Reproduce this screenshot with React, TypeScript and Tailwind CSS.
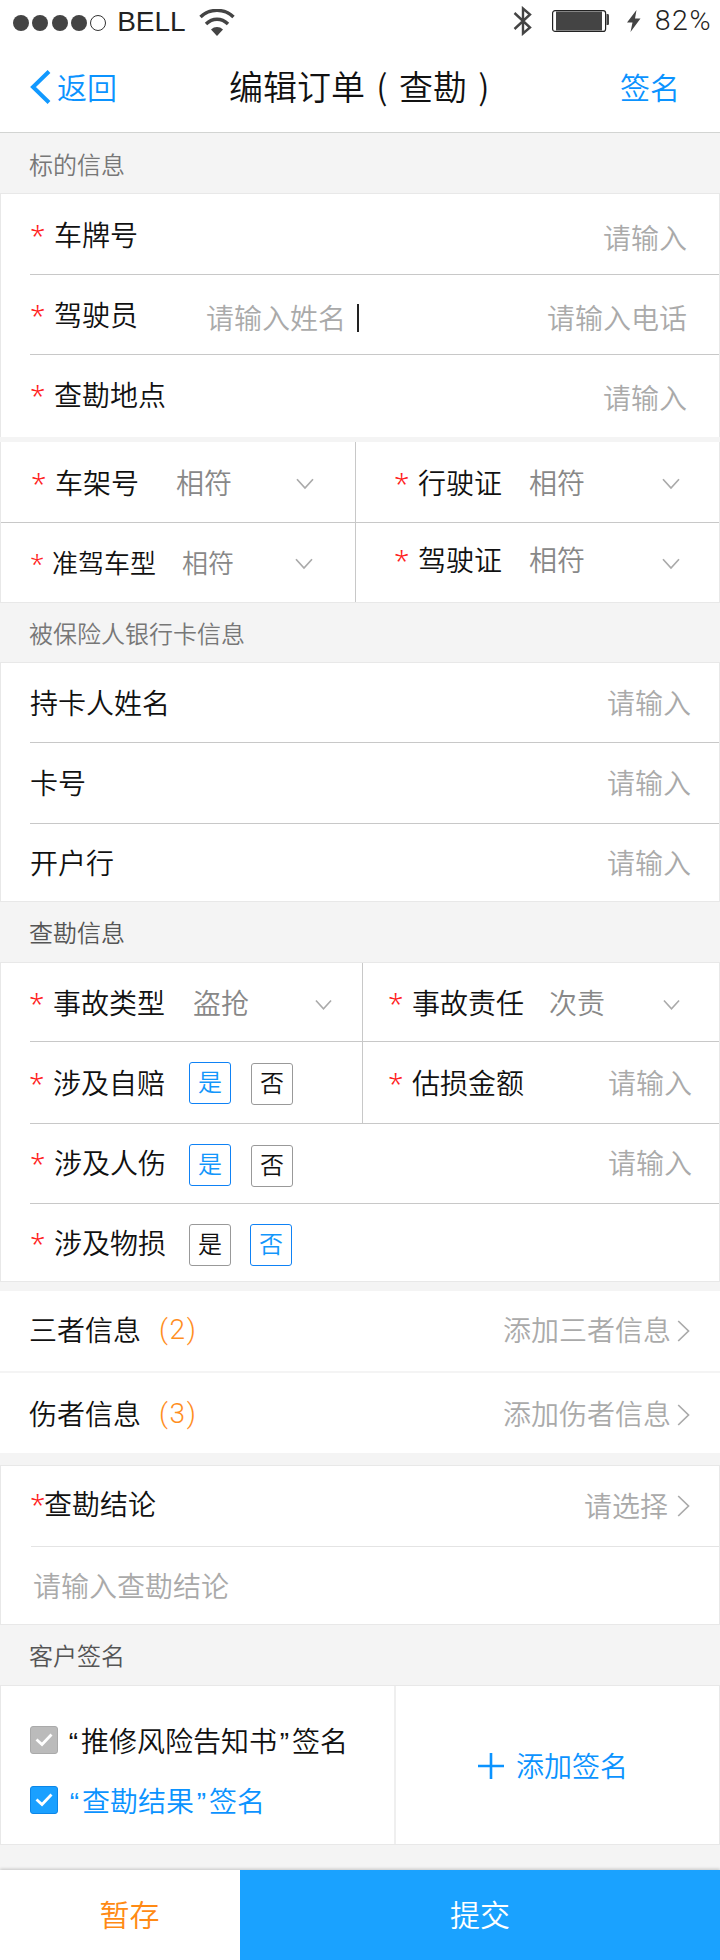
import { useState } from "react";
import type { ReactNode } from "react";

function Star({ className = "" }: { className?: string }) {
  return (
    <span
      className={`shrink-0 w-[24px] font-['Noto_Sans',sans-serif] text-[28px] leading-[32px] text-[#ff2020] ${className}`}
    >
      *
    </span>
  );
}

function Label({ children, className = "" }: { children: ReactNode; className?: string }) {
  return <span className={`shrink-0 text-[28px] leading-[30px] text-[#111] ${className}`}>{children}</span>;
}

function Hint({ children, className = "" }: { children: ReactNode; className?: string }) {
  return <span className={`shrink-0 text-[28px] leading-[30px] text-[#aaa] ${className}`}>{children}</span>;
}

function Count({ value }: { value: number }) {
  return (
    <span className="ml-[18px] pt-[2px] font-['Roboto',sans-serif] text-[28px] leading-[28px] tracking-[1.6px] text-[#ff8e1e]">
      ({value})
    </span>
  );
}

function Quoted({ children }: { children: ReactNode }) {
  return (
    <>
      <span className="inline-block w-[15px] text-center font-['Liberation_Sans',sans-serif]">“</span>
      {children}
      <span className="inline-block w-[15px] text-center font-['Liberation_Sans',sans-serif]">”</span>
    </>
  );
}

function SectionTitle({ children, className = "" }: { children: ReactNode; className?: string }) {
  return <h2 className={`px-[29px] text-[24px] leading-[24px] ${className}`}>{children}</h2>;
}

function ChevronDown({ className = "" }: { className?: string }) {
  return (
    <svg className={`shrink-0 ${className}`} width="18" height="12" viewBox="0 0 18 12" fill="none">
      <path d="M1 1.2L9 10L17 1.2" stroke="#aaa" strokeWidth="1.7" />
    </svg>
  );
}

function ChevronRight({ className = "" }: { className?: string }) {
  return (
    <svg className={`shrink-0 ${className}`} width="13" height="22" viewBox="0 0 13 22" fill="none">
      <path d="M1.2 1L11.5 11L1.2 21" stroke="#aaa" strokeWidth="1.7" />
    </svg>
  );
}

function Choice({
  active,
  onClick,
  children,
  className = "",
}: {
  active: boolean;
  onClick: () => void;
  children: ReactNode;
  className?: string;
}) {
  return (
    <button
      onClick={onClick}
      className={`shrink-0 flex items-center justify-center w-[42px] h-[42px] pb-[4px] rounded-[3px] border bg-white text-[24px] leading-[24px] ${
        active ? "border-[#0f82f5] text-[#1296fb]" : "border-[#999] text-[#111]"
      } ${className}`}
    >
      {children}
    </button>
  );
}

function Check({ className }: { className: string }) {
  return (
    <span className={`shrink-0 flex items-center justify-center w-[28px] h-[28px] rounded-[3px] border ${className}`}>
      <svg width="18" height="14" viewBox="0 0 18 14" fill="none">
        <path d="M1.5 6.5L7 11.5L16.5 1.5" stroke="#fff" strokeWidth="2.8" />
      </svg>
    </span>
  );
}

function StatusBar() {
  return (
    <div className="flex h-[44px] text-[#222]">
      <div className="flex gap-[3.3px] mt-[15px] ml-[13px]">
        {[0, 1, 2, 3].map((i) => (
          <span key={i} className="w-[16px] h-[16px] rounded-full bg-[#444]" />
        ))}
        <span className="w-[16px] h-[16px] rounded-full border border-[#333]" />
      </div>
      <span className="ml-[11px] mt-[8px] font-['Liberation_Sans',sans-serif] text-[28px] leading-[28px]">BELL</span>
      <svg className="ml-[13px] mt-[9px]" width="36" height="28" viewBox="0 0 36 28" fill="none">
        <path d="M1.5 8C10.5 -0.8 25.5 -0.8 34.5 8" stroke="#444" strokeWidth="3.4" />
        <path d="M7 15C13.5 8.6 22.5 8.6 29 15" stroke="#444" strokeWidth="3.4" />
        <path d="M12 20.5C15.5 17.2 20.5 17.2 24 20.5L18 27Z" fill="#444" />
      </svg>
      <div className="ml-auto flex">
        <svg className="mt-[6px]" width="20" height="30" viewBox="0 0 20 30" fill="none">
          <path d="M1.5 7L17 21.5L10 27.5V2.5L17 8.5L1.5 23" stroke="#444" strokeWidth="2.4" />
        </svg>
        <svg className="ml-[19px] mt-[10px]" width="58" height="22" viewBox="0 0 58 22" fill="none">
          <rect x="0.6" y="0.6" width="53" height="20.8" rx="2.5" stroke="#222" strokeWidth="1.2" />
          <rect x="4" y="1.5" width="46" height="19" fill="#444" />
          <path d="M54.5 4H56Q57 4 57 5.5V13.5Q57 15 56 15H54.5Z" fill="#444" />
        </svg>
        <svg className="ml-[17px] mt-[10px]" width="14" height="22" viewBox="0 0 14 22">
          <path d="M9.5 0L0 12.5H5.5L3.5 22L13.5 8.5H8L9.5 0Z" fill="#444" />
        </svg>
        <span className="ml-[14px] mr-[8px] mt-[7px] font-['Roboto',sans-serif] font-light text-[28.5px] leading-[28px] tracking-[1.5px]">
          82%
        </span>
      </div>
    </div>
  );
}

export default function App() {
  const [selfClaim, setSelfClaim] = useState(true);
  const [injury, setInjury] = useState(true);
  const [damage, setDamage] = useState(false);

  return (
    <div
      lang="zh-CN"
      className="w-[720px] h-[1960px] overflow-hidden flex flex-col bg-[#f4f4f4] font-['Noto_Sans_CJK_SC',sans-serif] font-[350] whitespace-nowrap"
    >
      <header className="h-[133px] shrink-0 bg-white border-b border-[#d2d4d2]">
        <StatusBar />
        <div className="flex items-start">
          <button className="flex shrink-0 w-[200px] ml-[29px] text-[#0b93ff]">
            <svg className="mt-[26px]" width="22" height="34" viewBox="0 0 22 34" fill="none">
              <path d="M20 1.5L4 17L20 32.5" stroke="#1199ff" strokeWidth="4" />
            </svg>
            <span className="ml-[6px] mt-[27px] text-[30px] leading-[30px]">返回</span>
          </button>
          <h1 className="flex mt-[25px] text-[34px] leading-[34px] text-[#111]">
            编辑订单<span className="w-[34px] text-center">(</span>查勘
            <span className="w-[34px] text-center">)</span>
          </h1>
          <button className="ml-auto mt-[27px] mr-[40px] text-[30px] leading-[30px] text-[#0b93ff]">签名</button>
        </div>
      </header>

      {/* 标的信息 */}
      <SectionTitle className="h-[60px] pt-[19px] text-[#777]">标的信息</SectionTitle>
      <section className="h-[244px] shrink-0 bg-white border border-b-0 border-[#e8e8e8]">
        <div className="ml-[29px] flex h-[81px] border-b border-[#c8c8c8]">
          <Star className="mt-[25px]" />
          <Label className="mt-[25px]">车牌号</Label>
          <Hint className="ml-auto mr-[32px] mt-[28px]">请输入</Hint>
        </div>
        <div className="ml-[29px] flex h-[80px] border-b border-[#c8c8c8]">
          <Star className="mt-[24px]" />
          <Label className="mt-[24px]">驾驶员</Label>
          <Hint className="ml-[68px] mt-[27px]">请输入姓名</Hint>
          <span className="ml-[11px] mt-[29px] w-[2px] h-[28px] bg-[#222]" />
          <Hint className="ml-auto mr-[32px] mt-[27px]">请输入电话</Hint>
        </div>
        <div className="ml-[29px] flex">
          <Star className="mt-[24px]" />
          <Label className="mt-[24px]">查勘地点</Label>
          <Hint className="ml-auto mr-[32px] mt-[27px]">请输入</Hint>
        </div>
      </section>

      <section className="mt-[5px] h-[161px] shrink-0 grid grid-cols-[355px_363px] grid-rows-[81px_79px] bg-white border border-t-0 border-[#e8e8e8]">
        <div className="flex border-r border-b border-[#c8c8c8] pl-[30px] pt-[25px]">
          <Star />
          <Label>车架号</Label>
          <Hint className="ml-[37px] text-[#888]!">相符</Hint>
          <ChevronDown className="ml-[64px] mt-[11px]" />
        </div>
        <div className="flex border-b border-[#c8c8c8] pl-[38px] pt-[25px]">
          <Star />
          <Label>行驶证</Label>
          <Hint className="ml-[27px] text-[#888]!">相符</Hint>
          <ChevronDown className="ml-[77px] mt-[11px]" />
        </div>
        <div className="flex border-r border-[#c8c8c8] pl-[29px] pt-[24px]">
          <Star className="w-[22px]! text-[26px]!" />
          <Label className="text-[26px]!">准驾车型</Label>
          <Hint className="ml-[26px] text-[26px]! text-[#888]!">相符</Hint>
          <ChevronDown className="ml-[61px] mt-[11px]" />
        </div>
        <div className="flex pl-[38px] pt-[21px]">
          <Star />
          <Label>驾驶证</Label>
          <Hint className="ml-[27px] text-[#888]!">相符</Hint>
          <ChevronDown className="ml-[77px] mt-[14px]" />
        </div>
      </section>

      {/* 被保险人银行卡信息 */}
      <SectionTitle className="h-[59px] pt-[18px] text-[#777]">被保险人银行卡信息</SectionTitle>
      <section className="h-[240px] shrink-0 bg-white border border-[#e8e8e8]">
        <div className="ml-[29px] flex h-[80px] border-b border-[#c8c8c8] pt-[24px] pr-[28px]">
          <Label>持卡人姓名</Label>
          <Hint className="ml-auto">请输入</Hint>
        </div>
        <div className="ml-[29px] flex h-[81px] border-b border-[#c8c8c8] pt-[24px] pr-[28px]">
          <Label>卡号</Label>
          <Hint className="ml-auto">请输入</Hint>
        </div>
        <div className="ml-[29px] flex pt-[23px] pr-[28px]">
          <Label>开户行</Label>
          <Hint className="ml-auto">请输入</Hint>
        </div>
      </section>

      {/* 查勘信息 */}
      <SectionTitle className="h-[60px] pt-[18px] text-[#555]">查勘信息</SectionTitle>
      <section className="h-[320px] shrink-0 bg-white border border-[#e8e8e8]">
        <div className="ml-[29px] flex h-[79px] border-b border-[#c8c8c8]">
          <div className="flex w-[333px] border-r border-[#c8c8c8] pt-[24px]">
            <Star className="-ml-px" />
            <Label>事故类型</Label>
            <Hint className="ml-[28px] text-[#888]!">盗抢</Hint>
            <ChevronDown className="ml-[66px] mt-[12px] w-[17px]" />
          </div>
          <div className="flex pl-[25px] pt-[24px]">
            <Star />
            <Label>事故责任</Label>
            <Hint className="ml-[25px] text-[#888]!">次责</Hint>
            <ChevronDown className="ml-[58px] mt-[12px] w-[17px]" />
          </div>
        </div>
        <div className="ml-[29px] flex h-[82px] border-b border-[#c8c8c8]">
          <div className="flex w-[333px] border-r border-[#c8c8c8]">
            <Star className="-ml-px mt-[25px]" />
            <Label className="mt-[25px]">涉及自赔</Label>
            <Choice active={selfClaim} onClick={() => setSelfClaim(true)} className="ml-[24px] mt-[20px]">
              是
            </Choice>
            <Choice active={!selfClaim} onClick={() => setSelfClaim(false)} className="ml-[20px] mt-[21px]">
              否
            </Choice>
          </div>
          <div className="flex flex-1 pl-[25px] pr-[27px] pt-[25px]">
            <Star />
            <Label>估损金额</Label>
            <Hint className="ml-auto">请输入</Hint>
          </div>
        </div>
        <div className="ml-[29px] flex h-[80px] border-b border-[#c8c8c8]">
          <Star className="mt-[23px]" />
          <Label className="mt-[23px]">涉及人伤</Label>
          <Choice active={injury} onClick={() => setInjury(true)} className="ml-[23px] mt-[20px]">
            是
          </Choice>
          <Choice active={!injury} onClick={() => setInjury(false)} className="ml-[20px] mt-[21px]">
            否
          </Choice>
          <Hint className="ml-auto mr-[27px] mt-[23px]">请输入</Hint>
        </div>
        <div className="ml-[29px] flex">
          <Star className="mt-[23px]" />
          <Label className="mt-[23px]">涉及物损</Label>
          <Choice active={damage} onClick={() => setDamage(true)} className="ml-[23px] mt-[20px]">
            是
          </Choice>
          <Choice active={!damage} onClick={() => setDamage(false)} className="ml-[19px] mt-[20px]">
            否
          </Choice>
        </div>
      </section>

      <section className="mt-[9px] shrink-0">
        <div className="flex h-[80px] bg-white pl-[29px] pt-[23px] pr-[30px]">
          <Label>三者信息</Label>
          <Count value={2} />
          <Hint className="ml-auto">添加三者信息</Hint>
          <ChevronRight className="ml-[6px] mt-[6px]" />
        </div>
        <div className="mt-[2px] flex h-[80px] bg-white pl-[29px] pt-[25px] pr-[30px]">
          <Label>伤者信息</Label>
          <Count value={3} />
          <Hint className="ml-auto">添加伤者信息</Hint>
          <ChevronRight className="ml-[6px] mt-[6px]" />
        </div>
      </section>

      <section className="mt-[12px] h-[160px] shrink-0 bg-white border border-[#e8e8e8]">
        <div className="ml-[30px] flex h-[81px] border-b border-[#e4e4e4] pr-[29px]">
          <Star className="w-[14px]! -ml-px mt-[22px]" />
          <Label className="mt-[22px]">查勘结论</Label>
          <Hint className="ml-auto mt-[24px]">请选择</Hint>
          <ChevronRight className="ml-[9px] mt-[29px]" />
        </div>
        <Hint className="block ml-[32px] mt-[23px]">请输入查勘结论</Hint>
      </section>

      {/* 客户签名 */}
      <SectionTitle className="h-[60px] pt-[18px] text-[#555]">客户签名</SectionTitle>
      <section className="h-[160px] shrink-0 flex bg-white border border-[#e8e8e8]">
        <div className="w-[395px] border-r-2 border-[#efefef] pl-[29px]">
          <div className="mt-[40px] flex h-[28px]">
            <Check className="bg-[#bbb] border-[#aaa]" />
            <Label className="ml-[8px] -mt-px">
              <Quoted>推修风险告知书</Quoted>签名
            </Label>
          </div>
          <div className="mt-[32px] flex h-[28px]">
            <Check className="bg-[#1aa0ff] border-[#0b86e8]" />
            <Label className="ml-[9px] -mt-px text-[#0b93ff]!">
              <Quoted>查勘结果</Quoted>签名
            </Label>
          </div>
        </div>
        <button className="flex flex-1 pl-[82px] pt-[65px] text-[28px] leading-[28px] text-[#0b93ff]">
          <svg className="mt-[2px]" width="26" height="26" viewBox="0 0 26 26">
            <path d="M13 0V26M0 13H26" stroke="#0b93ff" strokeWidth="2.6" />
          </svg>
          <span className="ml-[12px]">添加签名</span>
        </button>
      </section>

      <footer className="mt-auto h-[90px] shrink-0 flex text-[30px] leading-[30px] shadow-[0_-1px_3px_rgba(0,0,0,0.2)]">
        <button className="w-[240px] bg-white pl-[19px] pb-[4px] text-[#ff8a14]">暂存</button>
        <button className="flex-1 bg-[#1aa2ff] pb-[4px] text-white">提交</button>
      </footer>
    </div>
  );
}
